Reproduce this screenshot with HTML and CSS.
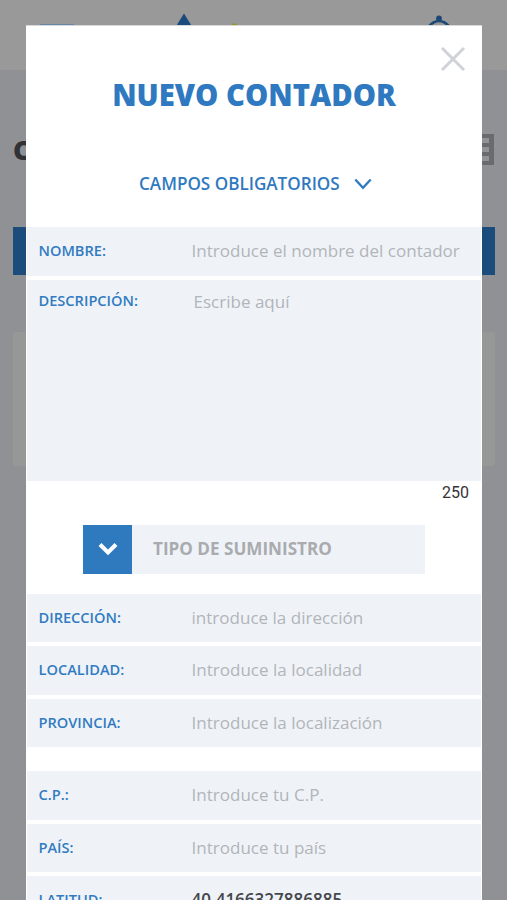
FILE: index.html
```html
<!DOCTYPE html>
<html lang="es">
<head>
<meta charset="utf-8">
<title>Nuevo contador</title>
<link rel="stylesheet" href="styles.css">
</head>
<body>
<div class="page">
  <header class="topbar">
    <span class="menu"></span>
    <svg class="logo" width="70" height="26" viewBox="0 0 70 26"><path d="M11 13.500L20 28H2z" fill="#1b4a7c"/><circle cx="61.500" cy="26.300" r="3" fill="#98952b"/></svg>
    <svg class="bell" width="24" height="28" viewBox="0 0 24 28"><circle cx="12" cy="18.500" r="2.900" fill="#1b4874"/><path d="M1 27q11-12 22 0" fill="none" stroke="#1b4874" stroke-width="2.500"/></svg>
  </header>
  <div class="heading">
    <span class="heading-text">C</span>
    <svg width="31" height="31" viewBox="0 0 31 31"><path d="M0 0h31v31H0z" fill="#6a6b6d"/><path d="M4 4h22v5H4zm0 9h22v5H4zm0 9h22v5H4z" fill="#929396"/></svg>
  </div>
  <div class="band"></div>
  <div class="card"></div>
</div>
<main class="modal">
  <svg class="close" width="26" height="26" viewBox="0 0 26 26"><path d="M2 2l22 22M24 2L2 24" fill="none" stroke="#cfd2d6" stroke-width="3"/></svg>
  <h1 class="title">NUEVO CONTADOR</h1>
  <div class="section">
    <span class="section-label">CAMPOS OBLIGATORIOS</span>
    <svg width="18" height="12" viewBox="0 0 18 12"><path d="M1.300 1.500L9 9.700l7.700-8.200" fill="none" stroke="#2f79c0" stroke-width="2.300"/></svg>
  </div>
  <div class="fields">
    <div class="row"><span class="label">NOMBRE:</span><span class="value">Introduce el nombre del contador</span></div>
    <div class="row area"><span class="label">DESCRIPCIÓN:</span><span class="value">Escribe aquí</span></div>
  </div>
  <div class="counter">250</div>
  <div class="select">
    <span class="select-button"><svg width="20" height="14" viewBox="0 0 20 14"><path d="M2 2.500l8 8 8-8" fill="none" stroke="#fff" stroke-width="4"/></svg></span>
    <span class="select-text">TIPO DE SUMINISTRO</span>
  </div>
  <div class="fields">
    <div class="row"><span class="label">DIRECCIÓN:</span><span class="value">introduce la dirección</span></div>
    <div class="row"><span class="label">LOCALIDAD:</span><span class="value">Introduce la localidad</span></div>
    <div class="row"><span class="label">PROVINCIA:</span><span class="value">Introduce la localización</span></div>
  </div>
  <div class="fields extra">
    <div class="row"><span class="label">C.P.:</span><span class="value">Introduce tu C.P.</span></div>
    <div class="row"><span class="label">PAÍS:</span><span class="value">Introduce tu país</span></div>
    <div class="row"><span class="label">LATITUD:</span><span class="value filled">40.4166327886885</span></div>
  </div>
</main>
</body>
</html>
```
FILE: styles.css
```css
* { box-sizing: border-box; }
body {
  margin: 0;
  height: 900px;
  overflow: hidden;
  position: relative;
  font-family: "Open Sans", sans-serif;
}
.page { height: 900px; background: #909195; }
.topbar {
  height: 70px;
  background: #999;
  display: flex;
  align-items: flex-start;
  padding-left: 40px;
}
.menu { width: 34px; height: 3px; margin-top: 24px; background: #6487a8; }
.logo { margin-left: 99px; }
.bell { margin-left: 184px; }
.heading {
  height: 157px;
  padding: 64px 13px 0;
  display: flex;
  justify-content: space-between;
}
.heading-text { font-size: 27px; line-height: 32px; font-weight: 800; color: #303236; }
.band { height: 48px; margin: 0 12px 0 13px; background: #1c4c7b; }
.card { height: 134px; margin: 57px 12px 0 13px; background: #969797; border-radius: 3px; }
.modal {
  position: absolute;
  left: 26px;
  top: 25px;
  width: 456px;
  height: 875px;
  overflow: hidden;
  background: #fff;
  border-top: 1px solid #d8d8d8;
}
.close { position: absolute; right: 16px; top: 20px; }
.title {
  margin: 48px 0 0;
  text-align: center;
  font-size: 29.250px;
  line-height: 43px;
  font-weight: 800;
  color: #2f79c0;
}
.section {
  margin-top: 48px;
  height: 37px;
  padding-left: 113px;
  display: flex;
  align-items: center;
  gap: 14px;
  font-size: 17.100px;
  font-weight: 600;
  color: #2f79c0;
}
.fields { margin: 25px 1px 0; display: grid; gap: 4px; }
.row {
  height: 48.500px;
  display: grid;
  grid-template-columns: 153px 1fr;
  align-items: center;
  padding-left: 11.500px;
  background: #eff3f8;
  white-space: nowrap;
}
.area { height: 201.500px; align-items: start; padding-top: 9px; }
.area .value { padding-left: 2px; }
.label { padding-bottom: 2px; font-size: 14.600px; line-height: 24px; font-weight: 600; color: #327bc1; }
.area .label { line-height: 22px; }
.value { font-size: 17.050px; line-height: 26px; color: #b2b5b9; }
.filled { font-weight: 600; color: #45474b; }
.counter {
  height: 24px;
  padding-right: 13px;
  text-align: right;
  font: 400 16px/24px Roboto, sans-serif;
  color: #333;
}
.select { width: 342px; height: 49px; margin: 19.500px 0 -5px 57px; display: flex; background: #eff3f8; }
.select-button { width: 49px; background: #2f7abf; display: flex; align-items: center; justify-content: center; }
.select-text { padding-left: 21px; font-size: 17.100px; line-height: 48px; font-weight: 700; color: #a9abae; }
.extra { margin-top: 24px; }
```
